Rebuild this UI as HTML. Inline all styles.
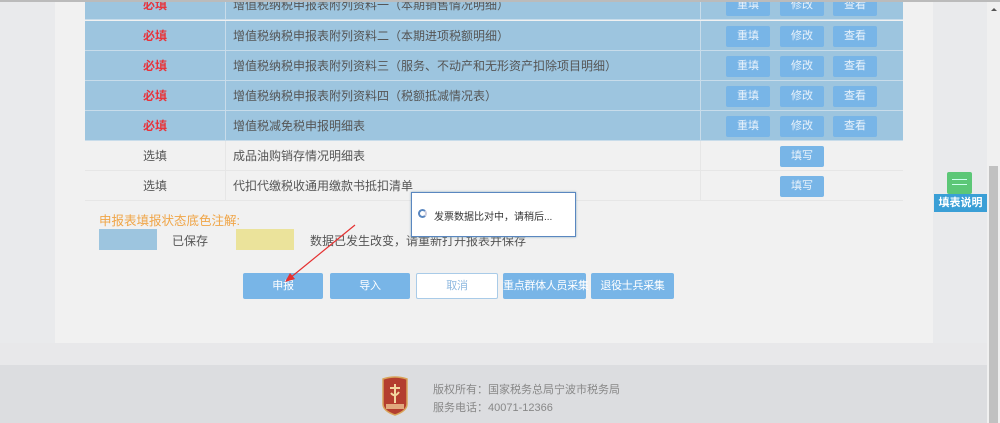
<!DOCTYPE html>
<html><head><meta charset="utf-8"><style>
*{margin:0;padding:0;box-sizing:border-box}
body{width:1000px;height:423px;overflow:hidden;position:relative;background:#e9eaec;font-family:"Liberation Sans","Noto Sans CJK SC",sans-serif;font-size:12px;color:#555}
.abs{position:absolute}
.panel{left:55px;top:0;width:878px;height:343px;background:#f1f1f1}
.band{left:0;top:343px;width:987px;height:22px;background:#e8e8ea}
.foot{left:0;top:365px;width:987px;height:58px;background:#dcdde0}
.row{position:absolute;left:85px;width:818px;height:30px;border-bottom:1px solid #c8dcea}
.blue{background:#9dc5df}
.grey{background:#f1f1f1;border-bottom:1px solid #e6e6e6}
.c1{position:absolute;left:0;width:140px;text-align:center;line-height:30px;font-size:12px}
.c2{position:absolute;left:140px;width:475px;padding-left:7px;line-height:30px;border-left:1px solid #c8dcea;height:30px;white-space:nowrap}
.c3{position:absolute;left:615px;width:203px;height:30px;border-left:1px solid #c8dcea}
.grey .c2,.grey .c3{border-left-color:#e6e6e6}
.red{color:#e8333a;font-weight:bold}
.b{position:absolute;top:5px;width:44px;height:21px;background:#78b5e7;color:#eaf3fb;text-align:center;line-height:21px;font-size:11px;border-radius:2px}
.btn{position:absolute;top:273px;width:83px;height:26px;background:#78b5e7;color:#fff;text-align:center;line-height:26px;font-size:11px;border-radius:2px;white-space:nowrap;letter-spacing:-0.3px}
</style></head><body>
<div class="abs" style="left:0;top:0;width:1000px;height:2px;background:#bbb;z-index:5"></div>
<div class="abs panel"></div>
<div class="abs band"></div>
<div class="abs foot"></div>

<div class="row blue" style="top:-10px"><div class="c1 red">必填</div><div class="c2">增值税纳税申报表附列资料一（本期销售情况明细）</div><div class="c3"><div class="b" style="left:25px">重填</div><div class="b" style="left:79px">修改</div><div class="b" style="left:132px">查看</div></div></div>
<div class="row blue" style="top:21px"><div class="c1 red">必填</div><div class="c2">增值税纳税申报表附列资料二（本期进项税额明细）</div><div class="c3"><div class="b" style="left:25px">重填</div><div class="b" style="left:79px">修改</div><div class="b" style="left:132px">查看</div></div></div>
<div class="row blue" style="top:51px"><div class="c1 red">必填</div><div class="c2">增值税纳税申报表附列资料三（服务、不动产和无形资产扣除项目明细）</div><div class="c3"><div class="b" style="left:25px">重填</div><div class="b" style="left:79px">修改</div><div class="b" style="left:132px">查看</div></div></div>
<div class="row blue" style="top:81px"><div class="c1 red">必填</div><div class="c2">增值税纳税申报表附列资料四（税额抵减情况表）</div><div class="c3"><div class="b" style="left:25px">重填</div><div class="b" style="left:79px">修改</div><div class="b" style="left:132px">查看</div></div></div>
<div class="row blue" style="top:111px"><div class="c1 red">必填</div><div class="c2">增值税减免税申报明细表</div><div class="c3"><div class="b" style="left:25px">重填</div><div class="b" style="left:79px">修改</div><div class="b" style="left:132px">查看</div></div></div>
<div class="row grey" style="top:141px"><div class="c1">选填</div><div class="c2">成品油购销存情况明细表</div><div class="c3"><div class="b" style="left:79px">填写</div></div></div>
<div class="row grey" style="top:171px"><div class="c1">选填</div><div class="c2">代扣代缴税收通用缴款书抵扣清单</div><div class="c3"><div class="b" style="left:79px">填写</div></div></div>

<div class="abs" style="left:99px;top:210px;color:#f0a547;font-size:12.5px">申报表填报状态底色注解:</div>
<div class="abs" style="left:99px;top:229px;width:58px;height:21px;background:#9dc5df"></div>
<div class="abs" style="left:172px;top:232px">已保存</div>
<div class="abs" style="left:236px;top:229px;width:58px;height:21px;background:#ebe39b"></div>
<div class="abs" style="left:310px;top:232px">数据已发生改变，请重新打开报表并保存</div>

<div class="btn" style="left:243px;width:80px">申报</div>
<div class="btn" style="left:330px;width:80px">导入</div>
<div class="btn" style="left:416px;width:82px;background:#fff;border:1px solid #a9cbe8;color:#8fb9e0;line-height:24px">取消</div>
<div class="btn" style="left:503px">重点群体人员采集</div>
<div class="btn" style="left:591px">退役士兵采集</div>

<div class="abs" style="left:411px;top:192px;width:165px;height:45px;background:#fff;border:1px solid #5a87c0;box-shadow:0 0 2px #8ab"></div>
<div class="abs" style="left:418px;top:209px;width:9px;height:9px;border:2px solid #5a87c0;border-right-color:#ccd;border-radius:50%"></div>
<div class="abs" style="left:434px;top:208px;font-size:10px;color:#333">发票数据比对中，请稍后...</div>

<svg class="abs" style="left:280px;top:222px" width="80" height="65"><line x1="75" y1="3" x2="10" y2="56" stroke="#e53030" stroke-width="1.2"/><polygon points="5,60 10,51 15,57" fill="#e53030"/></svg>

<div class="abs" style="left:947px;top:172px;width:25px;height:22px;background:#5cc777;border-radius:2px"></div>
<div class="abs" style="left:952px;top:179px;width:15px;height:1px;background:#cfe"></div>
<div class="abs" style="left:952px;top:184px;width:15px;height:1px;background:#cfe"></div>
<div class="abs" style="left:934px;top:194px;width:53px;height:18px;background:#3a9fd6;color:#fff;font-size:11px;font-weight:bold;text-align:center;line-height:18px">填表说明</div>

<div class="abs" style="left:987px;top:2px;width:13px;height:421px;background:#f0f0f0"></div>
<div class="abs" style="left:989px;top:166px;width:9px;height:257px;background:#c1c1c1"></div>
<div class="abs" style="left:991px;top:8px;width:0;height:0;border-left:3px solid transparent;border-right:3px solid transparent;border-bottom:3px solid #555"></div>

<svg class="abs" style="left:381px;top:376px" width="28" height="40"><path d="M2 3 Q14 -1 26 3 L26 28 Q26 35 14 39 Q2 35 2 28 Z" fill="#b43e2f" stroke="#d9a45a" stroke-width="1.5"/><path d="M14 8 V27 M9 12 H19 M10 17 Q14 22 18 16" stroke="#f3d7a0" stroke-width="2" fill="none"/><rect x="5" y="28" width="18" height="5" fill="#f3d7a0" opacity=".7"/></svg>
<div class="abs" style="left:433px;top:381px;color:#888;font-size:11px">版权所有：国家税务总局宁波市税务局</div>
<div class="abs" style="left:433px;top:399px;color:#888;font-size:11px">服务电话：40071-12366</div>
</body></html>
